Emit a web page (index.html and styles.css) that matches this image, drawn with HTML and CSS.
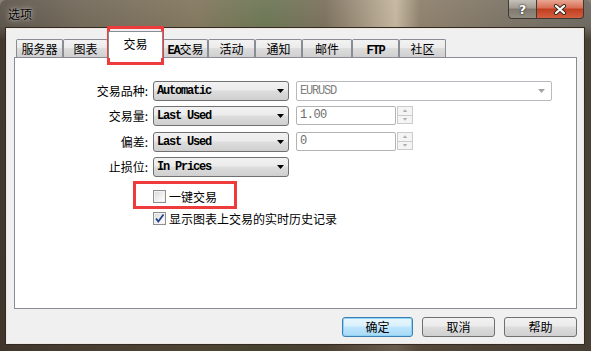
FILE: index.html
```html
<!DOCTYPE html>
<html lang="zh-CN">
<head>
  <meta charset="UTF-8">
  <meta name="viewport" content="width=device-width, initial-scale=1.0">
  <title>选项</title>
  <link rel="stylesheet" href="styles.css">
</head>
<body>
  <div class="window">
    <div class="titlebar">
      <span class="title">选项</span>
      <div class="caption-btns">
        <span class="cap-btn help">?</span>
        <span class="cap-btn close">
          <svg width="14" height="11" viewBox="0 0 14 11">
            <path d="M3 2 L11 9 M11 2 L3 9" stroke="#3b2a22" stroke-width="4.2" stroke-linecap="round"/>
            <path d="M3 2 L11 9 M11 2 L3 9" stroke="#fff" stroke-width="2.2" stroke-linecap="round"/>
          </svg>
        </span>
      </div>
    </div>

    <div class="client">
      <div class="tabs">
        <div class="tab w47">服务器</div>
        <div class="tab w45">图表</div>
        <div class="tab w55 active">交易</div>
        <div class="tab w45"><span class="lat">EA</span>交易</div>
        <div class="tab w47">活动</div>
        <div class="tab w47">通知</div>
        <div class="tab w50">邮件</div>
        <div class="tab w47"><span class="lat">FTP</span></div>
        <div class="tab w47">社区</div>
      </div>

      <div class="panel">
        <div class="form">
          <label class="lbl">交易品种:</label>
          <div class="combo"><span>Automatic</span></div>
          <div class="combo disabled"><span>EURUSD</span></div>

          <label class="lbl">交易量:</label>
          <div class="combo"><span>Last Used</span></div>
          <div class="spin-group">
            <div class="edit">1.00</div>
            <div class="spin"><span class="up"></span><span class="down"></span></div>
          </div>

          <label class="lbl">偏差:</label>
          <div class="combo"><span>Last Used</span></div>
          <div class="spin-group">
            <div class="edit">0</div>
            <div class="spin"><span class="up"></span><span class="down"></span></div>
          </div>

          <label class="lbl">止损位:</label>
          <div class="combo"><span>In Prices</span></div>
        </div>

        <div class="checks">
          <div class="check"><span class="box"></span>一键交易</div>
          <div class="check">
            <span class="box">
              <svg width="11" height="11" viewBox="0 0 11 11"><path d="M2 5.5 L4.3 8.5 L9.5 1.5" fill="none" stroke="#22408f" stroke-width="1.8"/></svg>
            </span>显示图表上交易的实时历史记录
          </div>
        </div>
      </div>

      <div class="buttons">
        <div class="btn default">确定</div>
        <div class="btn">取消</div>
        <div class="btn">帮助</div>
      </div>
    </div>

    <div class="mark mark-tab"></div>
    <div class="mark mark-check"></div>
  </div>
</body>
</html>
```

FILE: styles.css
```css
body { margin: 0; width: 591px; height: 351px; overflow: hidden; background: #8a8275; font-family: "Noto Sans CJK SC", sans-serif; font-size: 12px; color: #000; }

.window { position: relative; height: 351px; box-sizing: border-box; padding: 0 7px 7px 6px; display: flex; flex-direction: column; border-radius: 6px 6px 0 0;
  background:
    linear-gradient(180deg, rgba(255,255,255,0.06) 0, rgba(0,0,0,0) 26px, rgba(45,32,20,0.55) 40px, rgba(45,32,20,0.6) 100%),
    linear-gradient(90deg, #5d564c 0%, #746a5b 14%, #83785f 33%, #6c7755 45%, #7c715e 55%, #c4b59e 67%, #8e816d 71%, #7d7466 85%, #6e6a61 100%); }

.titlebar { height: 28px; display: flex; align-items: flex-start; }
.title { margin: 7px 0 0 2px; line-height: 14px; text-shadow: 0 0 6px rgba(255,255,255,0.7), 0 0 2px rgba(255,255,255,0.5); }
.caption-btns { margin-left: auto; display: flex; }
.cap-btn { box-sizing: border-box; height: 19px; border: 1px solid #3d3a36; border-top: none; display: flex; align-items: center; justify-content: center; }
.help { width: 29px; border-radius: 0 0 0 4px; background: linear-gradient(#c6c1b9, #a19b91 45%, #7f796f 50%, #918b80); color: #fff; font-family: "DejaVu Sans", sans-serif; font-weight: bold; font-size: 13px; text-shadow: 0 0 2px #222, 0 0 1px #222; }
.close { width: 47px; border-left: none; border-radius: 0 0 4px 0; background: linear-gradient(#e9a694, #d76d52 45%, #c23d20 50%, #d2603f); }

.client { flex: 1; display: flex; flex-direction: column; background: #f0f0f0; border: 1px solid #ede7e0; outline: 1px solid #342a21; padding: 2px 6px 0 7px; }

.tabs { height: 26px; display: flex; align-items: flex-end; padding-left: 2px; }
.tab { box-sizing: border-box; height: 18px; border: 1px solid #898c95; border-bottom: none; border-radius: 2px 2px 0 0; background: linear-gradient(#f3f3f3, #ebebeb 45%, #dddddd 50%, #cfcfcf); text-align: center; line-height: 17px; white-space: nowrap; }
.tab.active { height: 27px; margin-bottom: -1px; position: relative; z-index: 1; background: #fff; line-height: 24px; }
.w45 { width: 45px; }
.w47 { width: 47px; }
.w50 { width: 50px; }
.w55 { width: 55px; }
.lat { font-family: "Liberation Mono", monospace; font-weight: bold; letter-spacing: -1.2px; }

.panel { height: 252px; box-sizing: border-box; border: 1px solid #898c95; background: #fff; padding-top: 23px; }

.form { display: grid; grid-template-columns: 138px 143px auto; grid-template-rows: 25px 26px 25px 20px; align-items: start; }
.lbl { height: 20px; line-height: 20px; text-align: right; padding-right: 5px; }

.combo { box-sizing: border-box; width: 136px; height: 20px; display: flex; align-items: center; padding: 0 4px 0 3px; border: 1px solid #707070; border-radius: 3px; background: linear-gradient(#f2f2f2, #ebebeb 45%, #dddddd 50%, #cfcfcf); font-family: "Liberation Mono", monospace; font-weight: bold; letter-spacing: -1.2px; white-space: nowrap; }
.combo::after { content: ""; margin-left: auto; width: 7px; height: 4px; background: #000; clip-path: polygon(0 0, 100% 0, 50% 100%); }
.combo.disabled { width: 256px; border-color: #b7bbbf; border-radius: 2px; background: #fff; color: #7f7f7f; font-weight: normal; padding-right: 6px; }
.combo.disabled::after { background: #a3a3a3; }

.spin-group { display: flex; align-items: flex-start; }
.edit { box-sizing: border-box; width: 100px; height: 19px; border: 1px solid #b3b3b3; border-radius: 2px; padding-left: 3px; line-height: 17px; color: #6d6d6d; font-family: "Liberation Mono", monospace; letter-spacing: -0.5px; }
.spin { width: 16px; height: 18px; margin-left: 1px; display: flex; flex-direction: column; }
.spin span { flex: 1; display: flex; align-items: center; justify-content: center; border: 1px solid #cbcbcb; background: #f4f4f4; }
.spin .down { border-top: none; }
.spin span::after { content: ""; width: 5px; height: 3px; background: #b0b0b0; }
.spin .up::after { clip-path: polygon(50% 0, 100% 100%, 0 100%); }
.spin .down::after { clip-path: polygon(0 0, 100% 0, 50% 100%); }

.checks { margin: 13px 0 0 138px; display: flex; flex-direction: column; gap: 9px; }
.check { height: 13px; display: flex; align-items: center; gap: 3px; line-height: 13px; white-space: nowrap; }
.box { box-sizing: border-box; width: 13px; height: 13px; display: flex; align-items: center; justify-content: center; border: 1px solid #8e8f8f; background: linear-gradient(135deg, #d8d8d8, #f7f7f7 70%, #fdfdfd); box-shadow: inset 0 0 0 1px #f2f2f2; }

.buttons { display: flex; justify-content: flex-end; gap: 9px; margin-top: 8px; }
.btn { box-sizing: border-box; width: 73px; height: 20px; border: 1px solid #707070; border-radius: 3px; background: linear-gradient(#f2f2f2, #ebebeb 45%, #dddddd 50%, #cfcfcf); text-align: center; line-height: 18px; }
.btn.default { width: 71px; border-color: #3c7fb1; background: linear-gradient(#eaf6fd, #d9f0fc 45%, #bee6fd 50%, #a7d9f5); box-shadow: inset 0 0 0 1px #8fd2f5; }

.mark { position: absolute; box-sizing: border-box; border: 3px solid #ee3b3b; }
.mark-tab { left: 107px; top: 26px; width: 57px; height: 39px; }
.mark-check { left: 133px; top: 181px; width: 104px; height: 28px; }
```
